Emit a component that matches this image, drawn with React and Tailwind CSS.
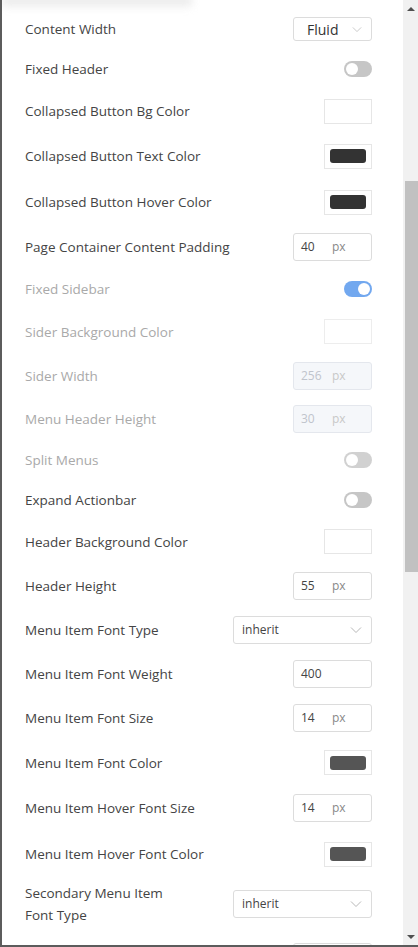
import React from 'react'

const rows = [
  { label: 'Content Width', type: 'small-select', value: 'Fluid', h: 'h-[40px]' },
  { label: 'Fixed Header', type: 'switch', h: 'h-[40px]' },
  { label: 'Collapsed Button Bg Color', type: 'color', fill: 'bg-white', h: 'h-[44px]' },
  { label: 'Collapsed Button Text Color', type: 'color', fill: 'bg-[#333333]', h: 'h-[46px]' },
  { label: 'Collapsed Button Hover Color', type: 'color', fill: 'bg-[#333333]', h: 'h-[46px]' },
  { label: 'Page Container Content Padding', type: 'px', value: '40', h: 'h-[43px]' },
  { label: 'Fixed Sidebar', type: 'switch', on: true, disabled: true, h: 'h-[42px]' },
  { label: 'Sider Background Color', type: 'color', fill: 'bg-white', disabled: true, h: 'h-[43px]' },
  { label: 'Sider Width', type: 'px', value: '256', disabled: true, h: 'h-[45px]' },
  { label: 'Menu Header Height', type: 'px', value: '30', disabled: true, h: 'h-[42px]' },
  { label: 'Split Menus', type: 'switch', disabled: true, h: 'h-[40px]' },
  { label: 'Expand Actionbar', type: 'switch', h: 'h-[40px]' },
  { label: 'Header Background Color', type: 'color', fill: 'bg-white', h: 'h-[43px]' },
  { label: 'Header Height', type: 'px', value: '55', h: 'h-[45px]' },
  { label: 'Menu Item Font Type', type: 'select', value: 'inherit', h: 'h-[44px]' },
  { label: 'Menu Item Font Weight', type: 'number', value: '400', h: 'h-[44px]' },
  { label: 'Menu Item Font Size', type: 'px', value: '14', h: 'h-[44px]' },
  { label: 'Menu Item Font Color', type: 'color', fill: 'bg-[#555555]', h: 'h-[45px]' },
  { label: 'Menu Item Hover Font Size', type: 'px', value: '14', h: 'h-[45px]' },
  { label: 'Menu Item Hover Font Color', type: 'color', fill: 'bg-[#555555]', h: 'h-[48px]' },
  {
    label: (
      <>
        Secondary Menu Item
        <br />
        Font Type
      </>
    ),
    key: 'secondary-font-type',
    type: 'select',
    value: 'inherit',
    h: 'h-[52px]',
  },
  // only the top edge of this row's input peeks above the frame
  { label: 'Secondary Menu Item Font Weight', type: 'number', value: '400', h: 'h-[54px]' },
]

const Chevron = ({ className }) => (
  <svg className={className} viewBox="0 0 12 8" fill="none">
    <path d="M1 1.5l5 5 5-5" stroke="currentColor" strokeWidth="1" />
  </svg>
)

const Switch = ({ on, disabled }) => (
  <div
    className={`w-[28px] h-[16px] rounded-full flex items-center px-[2px] ${
      on ? 'bg-[#4f93ec] justify-end' : 'bg-[#c6c6c6] justify-start'
    } ${disabled ? 'opacity-80' : ''}`}>
    <div className="w-[12px] h-[12px] rounded-full bg-white" />
  </div>
)

const Control = ({ row }) => {
  const dim = row.disabled
  if (row.type === 'switch') return <Switch on={row.on} disabled={dim} />
  if (row.type === 'color')
    return (
      <div
        className={`w-[48px] h-[25px] border border-[#e6e6e6] flex items-center justify-center ${
          dim ? 'opacity-70' : ''
        }`}>
        <div className={`w-[36px] h-[14px] rounded-[3px] ${row.fill}`} />
      </div>
    )
  if (row.type === 'small-select')
    return (
      <div className="w-[79px] h-[24px] border border-[#dcdcdc] rounded-[3px] flex items-center pl-[13px] pr-[9px] text-[14px] text-[#333]">
        <span className="flex-1">{row.value}</span>
        <Chevron className="w-[10px] h-[7px] text-[#c0c0c0]" />
      </div>
    )
  if (row.type === 'select')
    return (
      <div className="w-[139px] h-[28px] border border-[#dcdcdc] rounded-[3px] flex items-center pl-[8px] pr-[9px] text-[12px] text-[#444]">
        <span className="flex-1">{row.value}</span>
        <Chevron className="w-[12px] h-[8px] text-[#b8b8b8]" />
      </div>
    )
  return (
    <div
      className={`w-[79px] h-[28px] border rounded-[3px] flex items-center pl-[7px] text-[12px] ${
        dim
          ? 'bg-[#f5f7fa] border-[#e4e7ed] text-[#c0c4cc]'
          : 'bg-white border-[#dcdcdc] text-[#444]'
      }`}>
      <span className="w-[31px]">{row.value}</span>
      {row.type === 'px' && (
        <span className={dim ? 'text-[#c8c8c8]' : 'text-[#888]'}>px</span>
      )}
    </div>
  )
}

export default function App() {
  return (
    <div
      className="w-[418px] h-[947px] bg-white flex border-l-2 border-b-2 border-[#5c5c5c] overflow-hidden"
      style={{ fontFamily: '"Open Sans", "Liberation Sans", sans-serif' }}>
      <div className="flex-1 relative overflow-hidden">
        <div className="absolute left-0 top-[-4px] w-[190px] h-[10px] bg-[#dcdcdc] blur-[4px] opacity-60" />
        <div className="pt-[9px] pl-[23px] pr-[31px]">
          {rows.map((row) => (
            <div
              key={row.key || row.label}
              className={`flex items-center justify-between gap-2 ${row.h}`}>
              <span
                className={`text-[13.5px] leading-[22px] ${
                  row.disabled ? 'text-[#a9a9a9]' : 'text-[#444444]'
                }`}>
                {row.label}
              </span>
              <div className="shrink-0">
                <Control row={row} />
              </div>
            </div>
          ))}
        </div>
      </div>
      <div className="w-[15px] bg-[#f1f1f1] flex flex-col items-stretch">
        <div className="h-[17px] flex items-center justify-center">
          <div className="w-0 h-0 border-l-[4px] border-r-[4px] border-b-[4px] border-l-transparent border-r-transparent border-b-[#505050]" />
        </div>
        <div className="h-[164px]" />
        <div className="h-[391px] ml-[2px] bg-[#c1c1c1]" />
        <div className="flex-1" />
        <div className="h-[17px] flex items-center justify-center">
          <div className="w-0 h-0 border-l-[4px] border-r-[4px] border-t-[4px] border-l-transparent border-r-transparent border-t-[#505050]" />
        </div>
      </div>
    </div>
  )
}
